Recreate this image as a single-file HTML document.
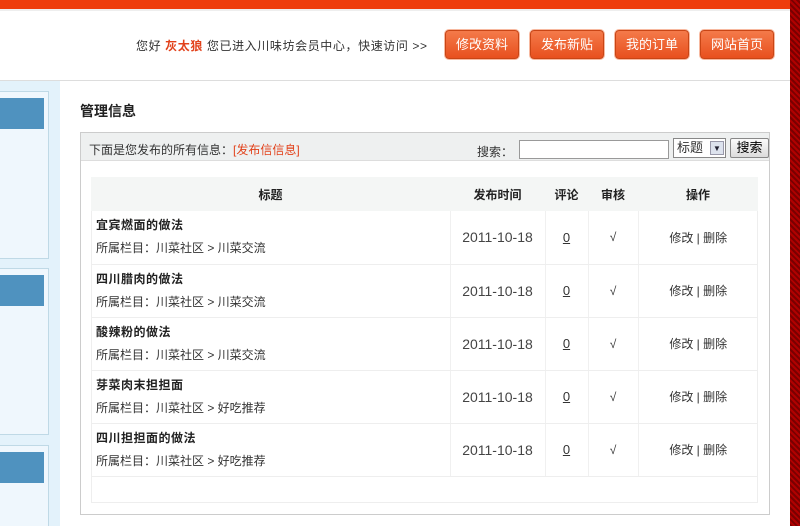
<!DOCTYPE html>
<html><head><meta charset="utf-8"><style>
*{margin:0;padding:0;box-sizing:border-box}
html,body{width:800px;height:526px;overflow:hidden}
body{background:#fff;font-family:"Liberation Sans","Noto Sans CJK SC","WenQuanYi Zen Hei",sans-serif;font-size:12px;color:#333;position:relative}
.abs{position:absolute}
.btn{position:absolute;top:30px;width:74px;height:29px;border:1px solid #c94515;border-radius:4px;background:linear-gradient(#f47a4a,#e8501e);color:#fff;font-size:13px;text-align:center;line-height:27px;box-shadow:0 0 0 1px #f7b9a0}
.panel{position:absolute;left:-1px;width:50px;border:1px solid #bfd9e6;background:#eff7fd}
.bar{position:absolute;left:0;width:44px;height:31px;background:#4f92bf}
table{border-collapse:collapse;position:absolute;left:91px;top:177px;width:667px}
td,th{border-bottom:1px solid #eee;font-size:12px}
th{background:#f4f6f5;height:34px;font-weight:bold;color:#222;border-bottom:none}
td{height:53px;text-align:center;border-left:1px solid #f0f0f0}
td.d{font-size:14px;color:#444}
td.t{text-align:left;padding-left:5px;border-left:none;line-height:23px}
td.t b{color:#222;letter-spacing:0.5px}
u{color:#333;font-size:13px}
</style></head><body>
<div class="abs" style="left:0;top:0;width:790px;height:9px;background:#ee3c0c"></div>
<div class="abs" style="left:0;top:9px;width:790px;height:2px;background:#eee"></div>
<div class="abs" style="left:790px;top:0;width:10px;height:526px;background:repeating-linear-gradient(45deg,#7a0000 0 2px,#b00000 2px 4px)"></div>
<div class="abs" style="left:136px;top:37px;font-size:12px;color:#333;letter-spacing:0.6px">您好 <b style="color:#e2411a">灰太狼</b> 您已进入川味坊会员中心，快速访问 &gt;&gt;</div>
<div class="btn" style="left:445px">修改资料</div>
<div class="btn" style="left:530px">发布新贴</div>
<div class="btn" style="left:615px">我的订单</div>
<div class="btn" style="left:700px">网站首页</div>
<div class="abs" style="left:0;top:80px;width:790px;height:1px;background:#ddd"></div>
<div class="abs" style="left:0;top:81px;width:60px;height:445px;background:#e3f2fb"></div>
<div class="panel" style="top:91px;height:168px"><div class="bar" style="top:6px"></div></div>
<div class="panel" style="top:268px;height:167px"><div class="bar" style="top:6px"></div></div>
<div class="panel" style="top:445px;height:81px;border-bottom:none"><div class="bar" style="top:6px"></div></div>
<div class="abs" style="left:80px;top:101px;font-size:14px;font-weight:bold;color:#222">管理信息</div>
<div class="abs" style="left:80px;top:132px;width:690px;height:383px;border:1px solid #ccc"></div>
<div class="abs" style="left:81px;top:133px;width:688px;height:28px;background:#eef0f0;border-bottom:1px solid #ddd"></div>
<div class="abs" style="left:89px;top:141px">下面是您发布的所有信息：<span style="color:#e2411a">[发布信信息]</span></div>
<div class="abs" style="left:477px;top:143px">搜索：</div>
<div class="abs" style="left:519px;top:140px;width:150px;height:19px;border:1px solid #999;background:#fff"></div>
<div class="abs" style="left:673px;top:138px;width:53px;height:20px;border:1px solid #888;background:#fff;font-size:13px;padding-left:3px;line-height:18px">标题<span style="position:absolute;right:1px;top:2px;width:14px;height:14px;background:#dde3ee;border:1px solid #99a;font-size:8px;line-height:13px;text-align:center;color:#223">▼</span></div>
<div class="abs" style="left:730px;top:138px;width:39px;height:20px;border:1px solid #888;border-radius:2px;background:linear-gradient(#fafafa,#dcdcdc);font-size:13px;text-align:center;line-height:18px;color:#000">搜索</div>
<div class="abs" style="left:91px;top:177px;width:667px;height:326px;border:1px solid #eee"></div>
<table>
<tr><th style="width:359px">标题</th><th style="width:95px">发布时间</th><th style="width:43px">评论</th><th style="width:50px">审核</th><th>操作</th></tr>
<tr><td class="t"><b>宜宾燃面的做法</b><br>所属栏目：川菜社区 &gt; 川菜交流</td><td class="d">2011-10-18</td><td><u>0</u></td><td>√</td><td>修改 | 删除</td></tr>
<tr><td class="t"><b>四川腊肉的做法</b><br>所属栏目：川菜社区 &gt; 川菜交流</td><td class="d">2011-10-18</td><td><u>0</u></td><td>√</td><td>修改 | 删除</td></tr>
<tr><td class="t"><b>酸辣粉的做法</b><br>所属栏目：川菜社区 &gt; 川菜交流</td><td class="d">2011-10-18</td><td><u>0</u></td><td>√</td><td>修改 | 删除</td></tr>
<tr><td class="t"><b>芽菜肉末担担面</b><br>所属栏目：川菜社区 &gt; 好吃推荐</td><td class="d">2011-10-18</td><td><u>0</u></td><td>√</td><td>修改 | 删除</td></tr>
<tr><td class="t"><b>四川担担面的做法</b><br>所属栏目：川菜社区 &gt; 好吃推荐</td><td class="d">2011-10-18</td><td><u>0</u></td><td>√</td><td>修改 | 删除</td></tr>
</table>
</body></html>
